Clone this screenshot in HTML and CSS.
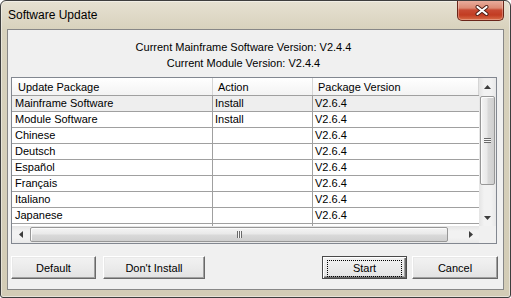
FILE: index.html
```html
<!DOCTYPE html>
<html>
<head>
<meta charset="utf-8">
<title>Software Update</title>
<link rel="stylesheet" href="styles.css">
</head>
<body>
<div class="window">
  <div class="titlebar">
    <span class="title">Software Update</span>
    <div class="close">
      <svg width="14" height="11" viewBox="0 0 14 11"><path d="M2.5 2 L11.5 9 M11.5 2 L2.5 9" stroke="#4a1c14" stroke-width="4" stroke-linecap="round" fill="none"/><path d="M2.5 2 L11.5 9 M11.5 2 L2.5 9" stroke="#ffffff" stroke-width="2.2" stroke-linecap="round" fill="none"/></svg>
    </div>
  </div>
  <div class="client">
    <div class="info">
      <div>Current Mainframe Software Version: V2.4.4</div>
      <div>Current Module Version: V2.4.4</div>
    </div>
    <div class="list">
      <div class="rows">
        <div class="row head"><div class="c">Update Package</div><div class="c">Action</div><div class="c">Package Version</div></div>
        <div class="row sel"><div class="c">Mainframe Software</div><div class="c">Install</div><div class="c">V2.6.4</div></div>
        <div class="row"><div class="c">Module Software</div><div class="c">Install</div><div class="c">V2.6.4</div></div>
        <div class="row"><div class="c">Chinese</div><div class="c"></div><div class="c">V2.6.4</div></div>
        <div class="row"><div class="c">Deutsch</div><div class="c"></div><div class="c">V2.6.4</div></div>
        <div class="row"><div class="c">Español</div><div class="c"></div><div class="c">V2.6.4</div></div>
        <div class="row"><div class="c">Français</div><div class="c"></div><div class="c">V2.6.4</div></div>
        <div class="row"><div class="c">Italiano</div><div class="c"></div><div class="c">V2.6.4</div></div>
        <div class="row"><div class="c">Japanese</div><div class="c"></div><div class="c">V2.6.4</div></div>
        <div class="row"><div class="c"></div><div class="c"></div><div class="c"></div></div>
      </div>
      <div class="vscroll">
        <div class="arrow"><svg width="7" height="4" viewBox="0 0 7 4"><path d="M3.5 0 L7 4 L0 4 Z" fill="#3d3d3d"/></svg></div>
        <div class="vthumb"><span class="grip-h"></span></div>
        <div class="fill"></div>
        <div class="arrow"><svg width="7" height="4" viewBox="0 0 7 4"><path d="M0 0 L7 0 L3.5 4 Z" fill="#3d3d3d"/></svg></div>
      </div>
      <div class="hscroll">
        <div class="arrow"><svg width="4" height="7" viewBox="0 0 4 7"><path d="M0 3.5 L4 0 L4 7 Z" fill="#3d3d3d"/></svg></div>
        <div class="hthumb"><span class="grip-v"></span></div>
        <div class="fill"></div>
        <div class="arrow"><svg width="4" height="7" viewBox="0 0 4 7"><path d="M0 0 L4 3.5 L0 7 Z" fill="#3d3d3d"/></svg></div>
      </div>
      <div class="corner"></div>
    </div>
    <div class="buttons">
      <button class="btn">Default</button>
      <button class="btn wide">Don't Install</button>
      <span class="spacer"></span>
      <button class="btn primary"><span class="focus">Start</span></button>
      <button class="btn cancel">Cancel</button>
    </div>
  </div>
</div>
</body>
</html>
```

FILE: styles.css
```css
html, body {
  margin: 0;
  padding: 0;
  background: #ffffff;
}

body {
  font-family: "Liberation Sans", Arial, sans-serif;
  font-size: 11px;
  color: #000;
}

.window {
  width: 511px;
  height: 298px;
  box-sizing: border-box;
  border: 1px solid #3e3e3e;
  border-radius: 6px 6px 3px 3px;
  background: linear-gradient(to bottom, #e6e1d2 0, #d8d2bd 28px, #d3ccb6 100%);
  box-shadow: inset 0 0 0 1px rgba(255, 255, 255, 0.45);
  display: flex;
  flex-direction: column;
  overflow: hidden;
}

.titlebar {
  height: 28px;
  flex: none;
  display: flex;
  align-items: flex-start;
}

.title {
  font-size: 12px;
  line-height: 16px;
  margin: 6px 0 0 7px;
}

.close {
  margin-left: auto;
  margin-right: 6px;
  margin-top: -1px;
  width: 47px;
  height: 21px;
  box-sizing: border-box;
  border: 1px solid #6a2519;
  border-top: none;
  border-radius: 0 0 5px 5px;
  background: linear-gradient(to bottom, #eab1a2 0%, #dc8a74 40%, #c84a33 50%, #c23c22 75%, #d86d48 100%);
  box-shadow: inset 0 0 0 1px rgba(255, 230, 220, 0.35);
  display: flex;
  align-items: center;
  justify-content: center;
  padding-left: 2px;
}

.close svg {
  display: block;
}

.client {
  flex: 1;
  margin: 0 6px 7px 6px;
  border: 1px solid #878787;
  background: #f0f0f0;
  display: flex;
  flex-direction: column;
}

.info {
  padding: 9px 24px 0 0;
  text-align: center;
  line-height: 16px;
}

.list {
  margin: 6px 0 0 3px;
  width: 486px;
  height: 167px;
  box-sizing: border-box;
  border: 1px solid #828790;
  background: #fff;
  display: grid;
  grid-template-columns: 467px 17px;
  grid-template-rows: 148px 17px;
}

.rows {
  overflow: hidden;
}

.row {
  display: grid;
  grid-template-columns: 201px 100px 166px;
  height: 16px;
  box-sizing: border-box;
  border-bottom: 1px solid #a0a0a0;
  line-height: 15px;
}

.row .c {
  padding-left: 2px;
  border-right: 1px solid #a0a0a0;
  white-space: nowrap;
  overflow: hidden;
}

.row .c:first-child {
  padding-left: 3px;
}

.row .c:last-child {
  border-right: none;
}

.row.head {
  height: 18px;
  line-height: 18px;
  background: linear-gradient(to bottom, #ffffff, #f3f3f3);
  border-bottom: 1px solid #a0a0a0;
}

.row.head .c {
  padding-left: 5px;
  border-right: 1px solid #d5d5d5;
}

.row.head .c:first-child {
  padding-left: 6px;
}

.row.sel {
  background: #eeeeee;
}

.vscroll {
  display: flex;
  flex-direction: column;
  background: linear-gradient(to right, #e4e4e4, #f2f2f2 30%, #f2f2f2 70%, #e8e8e8);
}

.hscroll {
  display: flex;
  background: linear-gradient(to bottom, #e4e4e4, #f2f2f2 30%, #f2f2f2 70%, #e8e8e8);
}

.arrow {
  flex: none;
  width: 17px;
  height: 17px;
  display: flex;
  align-items: center;
  justify-content: center;
}

.arrow svg {
  display: block;
}

.fill {
  flex: 1;
}

.vthumb {
  margin: 1px 1px 0 1px;
  height: 89px;
  box-sizing: border-box;
  border: 1px solid #979797;
  border-radius: 2px;
  background: linear-gradient(to right, #f4f4f4, #e9e9e9 45%, #d9d9d9 55%, #cfcfcf);
  box-shadow: inset 1px 1px 0 #fcfcfc;
  display: flex;
  align-items: center;
  justify-content: center;
}

.grip-h {
  width: 7px;
  height: 5px;
  background: repeating-linear-gradient(to bottom, #6a6a6a 0, #6a6a6a 1px, #f6f6f6 1px, #f6f6f6 2px);
}

.hthumb {
  margin: 1px 0 1px 1px;
  width: 418px;
  box-sizing: border-box;
  border: 1px solid #979797;
  border-radius: 2px;
  background: linear-gradient(to bottom, #f4f4f4, #e9e9e9 45%, #d9d9d9 55%, #cfcfcf);
  box-shadow: inset 1px 1px 0 #fcfcfc;
  display: flex;
  align-items: center;
  justify-content: center;
}

.grip-v {
  width: 5px;
  height: 7px;
  background: repeating-linear-gradient(to right, #6a6a6a 0, #6a6a6a 1px, #f6f6f6 1px, #f6f6f6 2px);
}

.corner {
  background: #f0f0f0;
}

.buttons {
  display: flex;
  margin: 12px 5px 0 3px;
}

.spacer {
  flex: 1;
}

.btn {
  font-family: "Liberation Sans", Arial, sans-serif;
  font-size: 11px;
  color: #000;
  width: 85px;
  height: 23px;
  padding: 0;
  margin: 0;
  box-sizing: border-box;
  border: 1px solid;
  border-color: #ffffff #696969 #696969 #ffffff;
  box-shadow: inset -1px -1px 0 #a0a0a0, inset 1px 1px 0 #e8e8e8;
  background: linear-gradient(to bottom, #f2f2f2, #ebebeb 50%, #e2e2e2);
  border-radius: 0;
}

.btn.wide {
  width: 102px;
  margin-left: 7px;
}

.btn.cancel {
  width: 86px;
  margin-left: 5px;
}

.btn.primary {
  border: 1px solid #4a4a4a;
  box-shadow: inset 1px 1px 0 #ffffff, inset -1px -1px 0 #696969, inset -2px -2px 0 #a0a0a0;
  padding: 3px 4px 3px 4px;
}

.btn.primary .focus {
  display: block;
  height: 15px;
  line-height: 15px;
  border: 1px dotted #000;
}
```
